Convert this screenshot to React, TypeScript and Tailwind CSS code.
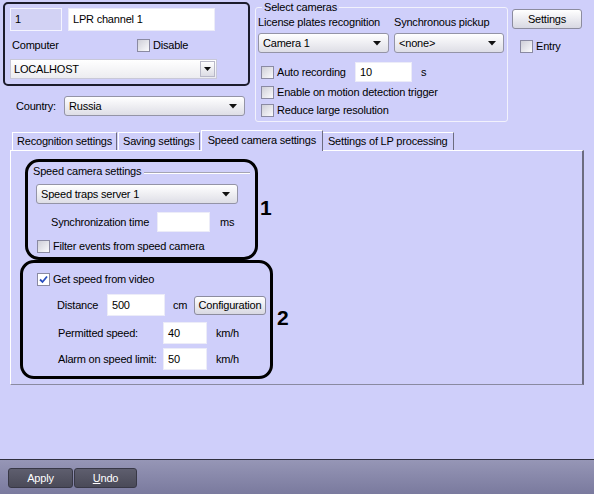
import React from 'react';

function Arrow() {
  return (
    <svg width="8" height="5" viewBox="0 0 8 5" className="shrink-0">
      <path d="M0 0 H8 L4 4.5 Z" fill="#111" />
    </svg>
  );
}

function Check({ checked }: { checked?: boolean }) {
  return (
    <span
      className={`w-[13px] h-[13px] shrink-0 border border-[#8a8aa2] flex items-center justify-center ${
        checked ? 'bg-white' : 'bg-linear-to-br from-[#cfcfd8] to-[#fbfbfd]'
      }`}
    >
      {checked && (
        <svg width="9" height="9" viewBox="0 0 9 9">
          <path d="M1 4.5 L3.5 7 L8 1.5" stroke="#2a4fbf" strokeWidth="1.8" fill="none" />
        </svg>
      )}
    </span>
  );
}

function Combo({ text, className }: { text: string; className: string }) {
  return (
    <div
      className={`h-[20px] flex items-center justify-between pl-[4px] pr-[7px] rounded-[3px] border border-[#9494a6] bg-linear-to-b from-white to-[#dedee6] ${className}`}
    >
      <span>{text}</span>
      <Arrow />
    </div>
  );
}

function Field({ value, className }: { value?: string; className: string }) {
  return (
    <div className={`bg-white border border-[#ececf8] flex items-center pl-[4px] ${className}`}>
      {value}
    </div>
  );
}

function XpButton({ label, className }: { label: string; className: string }) {
  return (
    <div
      className={`flex items-center justify-center rounded-[3px] border border-[#8c8c9e] bg-linear-to-b from-white to-[#d8d8e2] ${className}`}
    >
      {label}
    </div>
  );
}

export default function App() {
  return (
    <div className="w-[594px] h-[494px] bg-[#cfcffa] flex flex-col text-[11px] leading-[13px] tracking-[-0.2px] text-black font-['Liberation_Sans',Arial,sans-serif] overflow-hidden">
      {/* Top section */}
      <div className="flex h-[129px] shrink-0">
        <div className="w-[252px] pl-[3px] pt-[2px]">
          <div className="h-[84px] w-[247px] border-2 border-[#1c1c2c] rounded-[5px] px-[5px] pt-[4px]">
            <div className="flex gap-[6px]">
              <div className="w-[52px] h-[23px] bg-[#d2d2f4] border border-[#f4f4ff] flex items-center pl-[4px]">1</div>
              <Field value="LPR channel 1" className="w-[147px] h-[23px]" />
            </div>
            <div className="flex items-center h-[16px] mt-[6px]">
              <span className="ml-[2px] w-[125px]">Computer</span>
              <Check />
              <span className="ml-[3px]">Disable</span>
            </div>
            <div className="mt-[6px] w-[207px] h-[20px] bg-linear-to-b from-white to-[#ececf0] border border-[#c8c8d8] flex items-center justify-between pl-[3px] pr-[1px]">
              <span>LOCALHOST</span>
              <div className="w-[15px] h-[16px] border border-[#b8b8c8] bg-linear-to-b from-white to-[#dcdce4] flex items-center justify-center">
                <svg width="7" height="4" viewBox="0 0 7 4">
                  <path d="M0 0 H7 L3.5 4 Z" fill="#111" />
                </svg>
              </div>
            </div>
          </div>
          <div className="flex items-center mt-[10px] h-[20px]">
            <span className="ml-[13px] w-[48px]">Country:</span>
            <Combo text="Russia" className="w-[181px]" />
          </div>
        </div>

        <fieldset className="ml-[3px] mt-[1px] w-[253px] h-[121px] border border-[#f2f2fc] rounded-[3px] px-[2px]">
          <legend className="ml-[4px] px-[2px]">Select cameras</legend>
          <div className="flex gap-[14px] mt-[2px]">
            <span>License plates recognition</span>
            <span>Synchronous pickup</span>
          </div>
          <div className="flex gap-[5px] mt-[4px]">
            <Combo text="Camera 1" className="w-[131px]" />
            <Combo text="<none>" className="w-[110px]" />
          </div>
          <div className="flex items-center mt-[9px] h-[20px] pl-[3px]">
            <Check />
            <span className="ml-[3px] w-[78px]">Auto recording</span>
            <Field value="10" className="w-[57px] h-[20px]" />
            <span className="ml-[9px]">s</span>
          </div>
          <div className="flex items-center mt-[2px] h-[16px] pl-[3px]">
            <Check />
            <span className="ml-[3px]">Enable on motion detection trigger</span>
          </div>
          <div className="flex items-center mt-[2px] h-[16px] pl-[3px]">
            <Check />
            <span className="ml-[3px]">Reduce large resolution</span>
          </div>
        </fieldset>

        <div className="ml-[4px] pt-[9px]">
          <XpButton label="Settings" className="w-[70px] h-[20px]" />
          <div className="flex items-center mt-[11px] ml-[8px]">
            <Check />
            <span className="ml-[3px]">Entry</span>
          </div>
        </div>
      </div>

      {/* Tabs */}
      <div className="ml-[10px] w-[574px] shrink-0">
        <div className="flex items-end h-[21px] pl-[2px] relative z-10">
          <div className="h-[18px] px-[4px] flex items-center border-t border-l border-white border-r border-r-[#6c6c80]">Recognition settings</div>
          <div className="h-[18px] px-[4px] ml-[1px] flex items-center border-t border-l border-white border-r border-r-[#6c6c80]">Saving settings</div>
          <div className="h-[21px] px-[6px] ml-[1px] flex items-center bg-[#cfcffa] border-t border-l border-white border-r border-r-[#6c6c80] -mb-[1px] pb-[2px]">Speed camera settings</div>
          <div className="h-[18px] px-[5px] flex items-center border-t border-white border-r border-r-[#6c6c80]">Settings of LP processing</div>
        </div>
        <div className="h-[235px] border-t border-l border-white border-r-2 border-r-[#6c6c80] border-b border-b-[#8a8aa0] pt-[8px]">
          <div className="flex items-start">
            <div className="ml-[14px] w-[233px] h-[101px] border-[3px] border-black rounded-[14px] pl-[5px] pr-[5px]">
              <div className="flex items-center h-[13px] mt-[3px]">
                <span>Speed camera settings</span>
                <div className="flex-1 h-[2px] border-t border-[#a4a4b4] border-b border-b-white ml-[3px] mt-[2px]" />
              </div>
              <Combo text="Speed traps server 1" className="w-[202px] ml-[3px] mt-[6px]" />
              <div className="flex items-center h-[20px] mt-[8px]">
                <span className="ml-[18px] w-[106px]">Synchronization time</span>
                <Field className="w-[53px] h-[20px]" />
                <span className="ml-[10px]">ms</span>
              </div>
              <div className="flex items-center mt-[8px] ml-[4px]">
                <Check />
                <span className="ml-[3px]">Filter events from speed camera</span>
              </div>
            </div>
            <span className="ml-[2px] mt-[38px] text-[21px] leading-[21px] font-bold tracking-normal">1</span>
          </div>
          <div className="flex items-start">
            <div className="ml-[9px] w-[253px] h-[119px] border-[3px] border-black rounded-[14px] pl-[14px]">
              <div className="flex items-center mt-[10px]">
                <Check checked />
                <span className="ml-[3px]">Get speed from video</span>
              </div>
              <div className="flex items-center h-[22px] mt-[8px]">
                <span className="ml-[20px] w-[50px]">Distance</span>
                <Field value="500" className="w-[58px] h-[22px]" />
                <span className="ml-[8px] w-[21px]">cm</span>
                <XpButton label="Configuration" className="w-[72px] h-[19px]" />
              </div>
              <div className="flex items-center h-[22px] mt-[6px]">
                <span className="ml-[21px] w-[105px]">Permitted speed:</span>
                <Field value="40" className="w-[44px] h-[22px]" />
                <span className="ml-[9px]">km/h</span>
              </div>
              <div className="flex items-center h-[22px] mt-[4px]">
                <span className="ml-[21px] w-[105px]">Alarm on speed limit:</span>
                <Field value="50" className="w-[44px] h-[22px]" />
                <span className="ml-[9px]">km/h</span>
              </div>
            </div>
            <span className="ml-[4px] mt-[47px] text-[21px] leading-[21px] font-bold tracking-normal">2</span>
          </div>
        </div>
      </div>

      <div className="flex-1" />

      {/* Bottom bar */}
      <div className="h-[35px] shrink-0 border-t border-[#30303e] bg-linear-to-b from-[#9696b6] to-[#7a7a9e] flex items-start pt-[8px] pl-[8px] gap-[1px]">
        <div className="w-[65px] h-[20px] rounded-[3px] border border-[#383846] bg-linear-to-b from-[#5e5e6e] to-[#4a4a58] text-white flex items-center justify-center">Apply</div>
        <div className="w-[63px] h-[20px] rounded-[3px] border border-[#383846] bg-linear-to-b from-[#5e5e6e] to-[#4a4a58] text-white flex items-center justify-center">
          <span><span className="underline">U</span>ndo</span>
        </div>
      </div>
    </div>
  );
}
